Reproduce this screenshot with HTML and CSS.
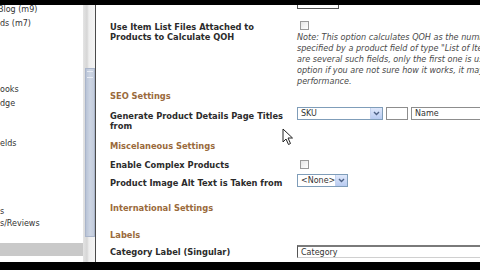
FILE: index.html
```html
<!DOCTYPE html>
<html lang="en">
  <head>
    <meta charset="UTF-8" />
    <title>Store Settings</title>
    <link rel="stylesheet" href="styles.css">
  </head>
  <body>
    <div class="bar-top"></div>

    <div class="screen">
      <!-- Left navigation (scrolled) -->
      <div class="sidebar">
        <ul class="nav">
          <li class="nav-cut">Blog (m9)</li>
          <li>ds (m7)</li>
          <li class="gap-lg">ooks</li>
          <li>dge</li>
          <li class="gap-md">elds</li>
          <li class="gap-xl">s</li>
          <li class="tight">s/Reviews</li>
        </ul>
        <div class="nav-selected"></div>
      </div>

      <div class="scrollbar">
        <div class="thumb"><span class="grip"></span></div>
      </div>

      <!-- Settings form -->
      <div class="main">
        <div class="row row-cut">
          <div></div>
          <div><div class="field field-cut"></div></div>
        </div>

        <div class="row row-qoh">
          <div class="label">Use Item List Files Attached to Products to Calculate QOH</div>
          <div>
            <span class="check"></span>
            <p class="note">
              Note: This option calculates QOH as the number of items<br>
              specified by a product field of type "List of Item Files". If there<br>
              are several such fields, only the first one is used. Do not enable this<br>
              option if you are not sure how it works, it may slow down<br>
              performance.
            </p>
          </div>
        </div>

        <h3 class="section section-seo">SEO Settings</h3>

        <div class="row row-seo">
          <div class="label">Generate Product Details Page Titles from</div>
          <div class="controls">
            <div class="select select-sku">SKU<span class="drop"><svg width="7" height="5" viewBox="0 0 7 5"><path d="M1 1l2.5 2.5L6 1" fill="none" stroke="#4d6185" stroke-width="1.4"/></svg></span></div>
            <div class="field field-sep"></div>
            <div class="field field-name">Name</div>
          </div>
        </div>

        <h3 class="section section-misc">Miscelaneous Settings</h3>

        <div class="row row-complex">
          <div class="label">Enable Complex Products</div>
          <div><span class="check"></span></div>
        </div>

        <div class="row row-alt">
          <div class="label">Product Image Alt Text is Taken from</div>
          <div>
            <div class="select select-none">&lt;None&gt;<span class="drop"><svg width="7" height="5" viewBox="0 0 7 5"><path d="M1 1l2.5 2.5L6 1" fill="none" stroke="#4d6185" stroke-width="1.4"/></svg></span></div>
          </div>
        </div>

        <h3 class="section section-intl">International Settings</h3>

        <h3 class="section section-labels">Labels</h3>

        <div class="row row-category">
          <div class="label">Category Label (Singular)</div>
          <div><div class="field field-category">Category</div></div>
        </div>

        <svg class="cursor" width="14" height="18" viewBox="0 0 14 18">
          <path d="M1 1v13l3-3 2.5 5.5 2-1L6 10h4.5z" fill="#fff" stroke="#222" stroke-width="1"/>
        </svg>
      </div>
    </div>

    <div class="bar-bottom"></div>
  </body>
</html>
```

FILE: styles.css
```css
body {
  margin: 0;
  width: 480px;
  height: 270px;
  overflow: hidden;
  background-color: #000;
  font-family: "DejaVu Sans", Verdana, sans-serif;
  color: #2b2b2b;
}

.bar-top {
  height: 5px;
  background-color: #000;
}

.bar-bottom {
  height: 8px;
  background-color: #000;
}

.screen {
  height: 257px;
  display: flex;
  background-color: #fff;
  overflow: hidden;
}

/* Sidebar */
.sidebar {
  width: 83px;
  flex-shrink: 0;
  display: flex;
  flex-direction: column;
  overflow: hidden;
}

.nav {
  list-style: none;
  margin: 0;
  padding: 0;
  font-size: 8px;
  line-height: 10px;
  color: #333;
}

.nav li {
  margin-top: 4px;
  white-space: nowrap;
}

.nav .nav-cut {
  margin-left: -2px;
  margin-top: 0;
}

.nav .gap-lg {
  margin-top: 56px;
}

.nav .gap-md {
  margin-top: 30px;
}

.nav .gap-xl {
  margin-top: 58px;
}

.nav .tight {
  margin-top: 2px;
}

.nav-selected {
  height: 13px;
  margin-top: 14px;
  background-color: #c9c9c9;
}

.scrollbar {
  width: 12px;
  flex-shrink: 0;
  background: linear-gradient(to right, #e4e4e4 0, #d6d6d6 4px, #eeeeee 6px, #f4f4f4 12px);
  border-right: 1px solid #4a4a4a;
}

.thumb {
  margin-top: 63px;
  margin-left: 2px;
  height: 167px;
  background: linear-gradient(to right, #b8c3d6, #cdd5e3 50%, #c3ccdc);
  border: 1px solid #aab5ca;
}

.grip {
  display: block;
  width: 6px;
  height: 5px;
  margin: 2px auto 0;
  border-top: 1px solid #e8ecf3;
  border-bottom: 1px solid #e8ecf3;
}

/* Main form */
.main {
  flex: 1;
  position: relative;
  padding-left: 14px;
  overflow: hidden;
}

.row {
  display: grid;
  grid-template-columns: 187px 1fr;
}

.label {
  font-size: 8.3px;
  font-weight: bold;
  line-height: 10px;
  padding-right: 10px;
}

.section {
  margin: 0;
  font-size: 8.3px;
  font-weight: bold;
  line-height: 10px;
  color: #9a6a3c;
}

.row-cut {
  margin-top: -9px;
}

.field {
  height: 13px;
  box-sizing: border-box;
  border: 1px solid #8d8d8d;
  background-color: #fff;
  font-size: 8px;
  line-height: 11px;
  padding-left: 3px;
  color: #333;
  white-space: nowrap;
}

.field-cut {
  width: 42px;
  border-color: #555;
}

.row-qoh {
  margin-top: 10px;
}

.row-qoh .label {
  margin-top: 3px;
}

.check {
  display: block;
  width: 7px;
  height: 7px;
  margin: 2px 0 0 3px;
  border: 1px solid #9a9a9a;
  background: linear-gradient(135deg, #e6e6e6, #fff);
}

.note {
  margin: 2px 0 0;
  font-size: 8.1px;
  font-style: italic;
  line-height: 11px;
  color: #4a4a4a;
  white-space: nowrap;
}

.section-seo {
  margin-top: 4px;
}

.row-seo {
  margin-top: 6px;
}

.row-seo .label {
  margin-top: 4px;
}

.controls {
  display: flex;
  gap: 3px;
}

.select {
  height: 13px;
  box-sizing: border-box;
  border: 1px solid #7f9db9;
  font-size: 8px;
  line-height: 11px;
  padding-left: 3px;
  color: #333;
  display: flex;
  justify-content: space-between;
  background-color: #fff;
}

.drop {
  width: 11px;
  background: linear-gradient(#dfe8fb, #b8cbf1);
  border-left: 1px solid #c4d2ef;
  display: flex;
  align-items: center;
  justify-content: center;
}

.select-sku {
  width: 86px;
  flex-shrink: 0;
}

.field-sep {
  width: 22px;
  flex-shrink: 0;
}

.field-name {
  width: 90px;
  flex-shrink: 0;
}

.section-misc {
  margin-top: 10px;
}

.row-complex {
  margin-top: 9px;
}

.row-complex .check {
  margin-top: 0;
}

.row-alt {
  margin-top: 4px;
}

.row-alt .label {
  margin-top: 4px;
}

.select-none {
  width: 51px;
}

.section-intl {
  margin-top: 15px;
}

.section-labels {
  margin-top: 17px;
}

.row-category {
  margin-top: 5px;
}

.row-category .label {
  margin-top: 2px;
}

.field-category {
  border-top: 2px solid #7a7a7a;
  border-left: 1px solid #555;
  border-right: none;
  border-bottom: 1px solid #d0d0d0;
}

.cursor {
  position: absolute;
  left: 186px;
  top: 123px;
}
```
